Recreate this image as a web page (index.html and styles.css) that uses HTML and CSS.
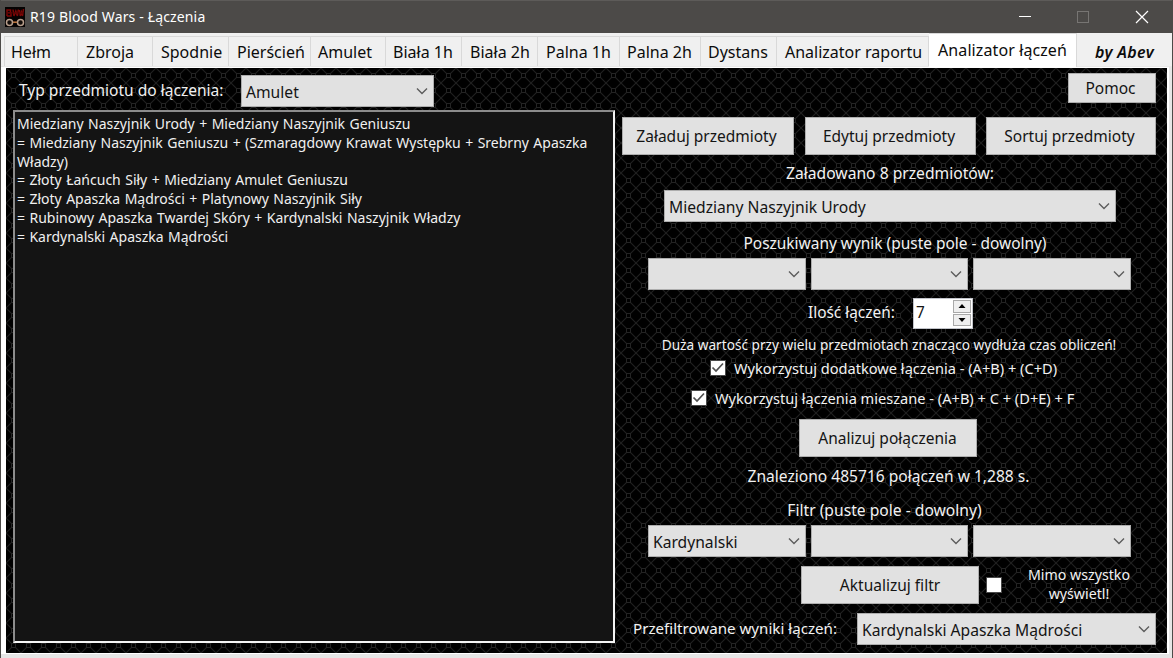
FILE: index.html
```
<!DOCTYPE html>
<html lang="pl">
<head>
<meta charset="utf-8">
<title>R19 Blood Wars - Łączenia</title>
<link rel="stylesheet" href="styles.css">
</head>
<body>
<div class="window">
  <header class="titlebar">
    <svg class="app-icon" width="20" height="20" viewBox="0 0 20 20">
      <rect width="20" height="20" fill="#050202"/>
      <g fill="none" stroke="#7d0606" stroke-width="1.5">
        <path d="M2 9V3H5.5V5.8H2H6V9H2"/>
        <path d="M8 2.5L9 9L10.8 4L12.4 9L13.4 2.5"/>
        <path d="M14.5 3L15.3 9L16.5 5L17.5 9L18.5 2"/>
      </g>
      <path d="M1 6H19" stroke="#4a0202" stroke-width="1"/>
      <g fill="#120c09" stroke="#b79d8b" stroke-width="1.5">
        <circle cx="4.5" cy="15.6" r="3"/>
        <circle cx="15.5" cy="15.6" r="3"/>
      </g>
      <path d="M8 15.2H12" stroke="#b5713c" stroke-width="1.6"/>
    </svg>
    <span class="caption">R19 Blood Wars - Łączenia</span>
    <svg class="controls" width="130" height="14" viewBox="0 0 130 14" fill="none">
      <path d="M0 6.5H12" stroke="#fff"/>
      <rect x="58.500" y="1.500" width="11" height="11" stroke="#777573"/>
      <path d="M117 1L129 13M129 1L117 13" stroke="#fff" stroke-width="1.200"/>
    </svg>
  </header>

  <nav class="tabs">
    <div class="tab t1">Hełm</div>
    <div class="tab t2">Zbroja</div>
    <div class="tab t3">Spodnie</div>
    <div class="tab t4">Pierścień</div>
    <div class="tab t5">Amulet</div>
    <div class="tab t6">Biała 1h</div>
    <div class="tab t7">Biała 2h</div>
    <div class="tab t8">Palna 1h</div>
    <div class="tab t9">Palna 2h</div>
    <div class="tab t10">Dystans</div>
    <div class="tab t11">Analizator raportu</div>
    <div class="tab active">Analizator łączeń</div>
    <div class="author">by Abev</div>
  </nav>

  <main class="page">
    <svg class="mesh" width="1161" height="585">
      <defs>
        <pattern id="mesh" x="0" y="0" width="15" height="15" patternUnits="userSpaceOnUse">
          <path d="M0 15L15 0M0 0L15 15" stroke="#202020" stroke-width="1.100" fill="none"/>
          <rect x="5.500" y="5.500" width="4" height="4" fill="#000" stroke="#242424"/>
        </pattern>
      </defs>
      <rect width="1161" height="585" fill="#000"/>
      <rect width="1161" height="585" fill="url(#mesh)"/>
    </svg>

    <section class="left">
      <div class="type-row">
        <label class="type-label">Typ przedmiotu do łączenia:</label>
        <div class="combo type-combo"><span>Amulet</span><svg class="chev" width="12" height="8" viewBox="0 0 12 8"><path d="M1 1.500L6 6.500L11 1.500"/></svg></div>
      </div>
      <div class="results">Miedziany Naszyjnik Urody + Miedziany Naszyjnik Geniuszu<br>= Miedziany Naszyjnik Geniuszu + (Szmaragdowy Krawat Występku + Srebrny Apaszka<br>Władzy)<br>= Złoty Łańcuch Siły + Miedziany Amulet Geniuszu<br>= Złoty Apaszka Mądrości + Platynowy Naszyjnik Siły<br>= Rubinowy Apaszka Twardej Skóry + Kardynalski Naszyjnik Władzy<br>= Kardynalski Apaszka Mądrości</div>
    </section>

    <section class="right">
      <div class="button help">Pomoc</div>
      <div class="actions">
        <div class="button load">Załaduj przedmioty</div>
        <div class="button edit">Edytuj przedmioty</div>
        <div class="button sort">Sortuj przedmioty</div>
      </div>
      <div class="line loaded">Załadowano 8 przedmiotów:</div>
      <div class="combo item-combo"><span>Miedziany Naszyjnik Urody</span><svg class="chev" width="12" height="8" viewBox="0 0 12 8"><path d="M1 1.500L6 6.500L11 1.500"/></svg></div>
      <div class="line wanted">Poszukiwany wynik (puste pole - dowolny)</div>
      <div class="triple">
        <div class="combo"><span></span><svg class="chev" width="12" height="8" viewBox="0 0 12 8"><path d="M1 1.500L6 6.500L11 1.500"/></svg></div>
        <div class="combo"><span></span><svg class="chev" width="12" height="8" viewBox="0 0 12 8"><path d="M1 1.500L6 6.500L11 1.500"/></svg></div>
        <div class="combo"><span></span><svg class="chev" width="12" height="8" viewBox="0 0 12 8"><path d="M1 1.500L6 6.500L11 1.500"/></svg></div>
      </div>
      <div class="count">
        <label>Ilość łączeń:</label>
        <div class="spinner"><span>7</span>
          <div class="arrows">
            <div class="arrow"><svg width="8" height="4" viewBox="0 0 8 4"><path d="M0.500 4L4 0L7.500 4Z"/></svg></div>
            <div class="arrow"><svg width="8" height="4" viewBox="0 0 8 4"><path d="M0.500 0L4 4L7.500 0Z"/></svg></div>
          </div>
        </div>
      </div>
      <div class="line note">Duża wartość przy wielu przedmiotach znacząco wydłuża czas obliczeń!</div>
      <div class="check extra"><span class="box"><svg width="15" height="15" viewBox="0 0 15 15"><path d="M2.500 7.500L6 11L13 3.500"/></svg></span>Wykorzystuj dodatkowe łączenia - (A+B) + (C+D)</div>
      <div class="check mixed"><span class="box"><svg width="15" height="15" viewBox="0 0 15 15"><path d="M2.500 7.500L6 11L13 3.500"/></svg></span>Wykorzystuj łączenia mieszane - (A+B) + C + (D+E) + F</div>
      <div class="button analyze">Analizuj połączenia</div>
      <div class="line found">Znaleziono 485716 połączeń w 1,288 s.</div>
      <div class="line filter">Filtr (puste pole - dowolny)</div>
      <div class="triple">
        <div class="combo"><span>Kardynalski</span><svg class="chev" width="12" height="8" viewBox="0 0 12 8"><path d="M1 1.500L6 6.500L11 1.500"/></svg></div>
        <div class="combo"><span></span><svg class="chev" width="12" height="8" viewBox="0 0 12 8"><path d="M1 1.500L6 6.500L11 1.500"/></svg></div>
        <div class="combo"><span></span><svg class="chev" width="12" height="8" viewBox="0 0 12 8"><path d="M1 1.500L6 6.500L11 1.500"/></svg></div>
      </div>
      <div class="update-row">
        <div class="button update">Aktualizuj filtr</div>
        <span class="box"></span>
        <div class="anyway">Mimo wszystko<br>wyświetl!</div>
      </div>
      <div class="final-row">
        <label>Przefiltrowane wyniki łączeń:</label>
        <div class="combo final-combo"><span>Kardynalski Apaszka Mądrości</span><svg class="chev" width="12" height="8" viewBox="0 0 12 8"><path d="M1 1.500L6 6.500L11 1.500"/></svg></div>
      </div>
    </section>
  </main>
</div>
</body>
</html>
```

FILE: styles.css
```
* { box-sizing: border-box; }
body { margin: 0; font-family: "Noto Sans", "Open Sans", sans-serif; color: #0c0c0c; }
.window {
  width: 1173px; height: 658px; overflow: hidden;
  display: flex; flex-direction: column;
  background: #e6e6e6; border-right: 1px solid #4c4a48; border-left: 1px solid #4c4a48;
  white-space: nowrap;
}

.titlebar {
  flex: none; height: 33px; display: flex; align-items: center;
  background: #4c4a48; border-top: 1px solid #5d5b59; color: #fff;
  padding: 0 0 1px 4px;
}
.app-icon { margin-right: 5px; }
.caption { font-size: 14px; letter-spacing: 0.15px; }
.controls { margin-left: auto; margin-right: 23px; }

.tabs {
  flex: none; height: 34px; display: flex; align-items: flex-start;
  padding: 0 0 0 3px; background: #f0f0f0; font-size: 16px;
  border-bottom: 1px solid #e8e8e8;
}
.tab {
  height: 30px; margin-top: 3px; padding-left: 8px; line-height: 30px;
  border-top: 1px solid #d9d9d9; border-right: 1px solid #d9d9d9; background: #f0f0f0;
}
.t1 { width: 74px; padding-left: 6px; border-left: 1px solid #d9d9d9; }
.t2 { width: 75px; }
.t3 { width: 76px; }
.t4 { width: 82px; }
.t5 { width: 75px; padding-left: 7px; }
.t6 { width: 76px; padding-left: 7px; }
.t7 { width: 76px; }
.t8 { width: 82px; }
.t9 { width: 81px; padding-left: 7px; }
.t10 { width: 76px; padding-left: 7px; }
.t11 { width: 152px; }
.tab.active { width: 148px; height: 34px; margin-top: 0; padding-left: 9px; line-height: 32px; letter-spacing: 0.1px; background: #fff; }
.author { margin: 8px 0 0 18px; line-height: 22px; font-size: 16px; font-style: italic; font-weight: 600; letter-spacing: 0.35px; }

.page {
  flex: none; position: relative; width: 1168px; height: 587px;
  display: flex; border: solid #fff; border-width: 1px 2px 2px 5px;
  background: #000;
}
.mesh { position: absolute; left: 0; top: 0; }
.left, .right { position: relative; }

.left { width: 609px; padding: 7px 0 0 7px; color: #f0f0f0; }
.type-row { display: flex; height: 35px; }
.type-label { width: 228px; padding-left: 6px; line-height: 30px; font-size: 15.550px; }
.results {
  width: 602px; height: 533px; padding: 3px 2px;
  background: #141414; border: 2px solid; border-color: #8c8c8c #f4f4f4 #f4f4f4 #8c8c8c;
  font-size: 14px; line-height: 18.750px; word-spacing: 0.800px;
}

.combo {
  display: flex; align-items: center; height: 32px; padding: 0 5px 0 4px;
  background: #e1e1e1; border: 1px solid #adadad; color: #141414; font-size: 15.650px;
}
.combo span { flex: 1; padding-top: 2px; }
.chev { fill: none; stroke: #5c5c5c; stroke-width: 1.400; }
.type-combo { width: 193px; }

.button {
  display: flex; align-items: center; justify-content: center; height: 38px; padding-right: 3px;
  background: #e1e1e1; border: 1px solid #adadad; color: #141414; font-size: 15.500px;
}

.right { width: 552px; padding: 5px 0 0 7px; color: #f2f2f2; font-size: 15.500px; }
.help { width: 88px; height: 30px; margin-left: 446px; }
.actions { display: flex; margin-top: 14px; }
.load { width: 172px; }
.edit { width: 171px; margin-left: 11px; }
.sort { width: 170px; margin-left: 10px; }
.line { width: 534px; height: 22px; line-height: 22px; text-align: center; }
.loaded { width: 536px; margin-top: 7px; font-size: 15.650px; }
.item-combo { width: 452px; margin: 6px 0 0 42px; }
.wanted { width: 546px; margin-top: 10px; font-size: 15.450px; }
.triple { display: flex; gap: 5px; width: 483px; margin: 4px 0 0 26px; }
.triple .combo { flex: 1; }
.count { display: flex; margin-top: 8px; padding-left: 186px; font-size: 15.400px; }
.count label { width: 105px; line-height: 29px; }
.spinner { width: 60px; height: 31px; display: flex; justify-content: space-between; padding: 1px 1px 2px 2px; background: #fff; border: 1px solid #c2c4ca; color: #141414; }
.spinner span { line-height: 26px; }
.arrows { width: 18px; display: flex; flex-direction: column; gap: 1px; }
.arrow { flex: 1; display: flex; align-items: center; justify-content: center; background: #efefef; border: 1px solid #a9a9a9; }
.arrow svg { fill: #000; }
.note { margin-top: 5px; font-size: 13.650px; }
.check { display: flex; align-items: center; height: 22px; font-size: 14.600px; line-height: 20px; padding-bottom: 1px; }
.box { display: block; width: 16px; height: 16px; background: #fff; border: 1px solid #4a4a4a; }
.box svg { display: block; margin: -1px 0 0 -1px; fill: none; stroke: #505050; stroke-width: 1.700; }
.check .box { margin-right: 8px; }
.extra { margin: 1px 0 0 88px; }
.mixed { margin: 8px 0 0 69px; }
.analyze { width: 178px; margin: 10px 0 0 177px; padding-right: 1px; }
.found { width: 533px; margin-top: 8px; font-size: 15.570px; }
.filter { width: 525px; margin: 12px 0 1px; font-size: 15.650px; }
.update-row { display: flex; align-items: center; margin-top: 9px; }
.update { flex: none; width: 178px; margin: 0 7px 0 179px; padding-right: 0; }
.update-row .box { flex: none; }
.anyway { width: 154px; padding-left: 0; margin-top: -1px; font-size: 14.200px; line-height: 18.500px; text-align: center; }
.final-row { display: flex; margin: 9px 0 0 11px; }
.final-row label { width: 224px; line-height: 31px; font-size: 15.130px; }
.final-combo { width: 299px; }
```
